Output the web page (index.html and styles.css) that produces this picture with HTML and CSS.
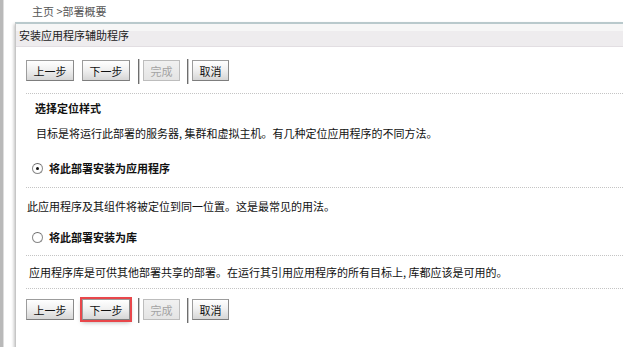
FILE: index.html
```html
<!DOCTYPE html>
<html>
<head>
    <title>部署概要</title>
    <link rel="stylesheet" href="styles.css">
</head>
<body>
    <div class="page">
        <div class="rail"></div>
        <div class="main">
            <div class="topbar"></div>
            <div class="crumb">主页 &gt;部署概要</div>

            <div class="panel">
                <div class="panel-head">安装应用程序辅助程序</div>
                <div class="panel-body">
                    <div class="btnbar">
                        <button class="btn wide">上一步</button>
                        <button class="btn wide">下一步</button>
                        <span class="sep"></span>
                        <button class="btn" disabled>完成</button>
                        <span class="sep"></span>
                        <button class="btn">取消</button>
                    </div>

                    <div class="section">
                        <div class="title">选择定位样式</div>
                        <p class="intro">目标是将运行此部署的服务器, 集群和虚拟主机。有几种定位应用程序的不同方法。</p>
                        <label class="choice first"><span class="radio checked"></span>将此部署安装为应用程序</label>
                    </div>

                    <div class="section">
                        <p class="desc">此应用程序及其组件将被定位到同一位置。这是最常见的用法。</p>
                        <label class="choice"><span class="radio"></span>将此部署安装为库</label>
                    </div>

                    <div class="section">
                        <p class="desc lib">应用程序库是可供其他部署共享的部署。在运行其引用应用程序的所有目标上, 库都应该是可用的。</p>
                    </div>

                    <div class="btnbar bottom">
                        <button class="btn wide">上一步</button>
                        <button class="btn wide marked">下一步</button>
                        <span class="sep"></span>
                        <button class="btn" disabled>完成</button>
                        <span class="sep"></span>
                        <button class="btn">取消</button>
                    </div>
                </div>
            </div>
        </div>
    </div>
</body>
</html>
```

FILE: styles.css
```css
html, body {
  margin: 0;
  padding: 0;
  background-color: #fff;
  overflow: hidden;
}
body {
  font-family: "Noto Sans CJK SC", "Liberation Sans", sans-serif;
  font-size: 11px;
  color: #111;
}
.page {
  display: flex;
  height: 347px;
}
.rail {
  width: 3px;
  background-color: #b9b9b9;
  border-right: 1px solid #dedede;
  flex: none;
}
.main {
  flex: 1;
  margin-left: 11px;
  display: flex;
  flex-direction: column;
}
.topbar {
  height: 2px;
  background-color: #d9e6f7;
}
.crumb {
  height: 26px;
  line-height: 22px;
  padding-left: 17px;
  color: #555;
}
.panel {
  border-top: 2px solid #b9c9cc;
  border-left: 1px solid #c6c6c6;
  border-bottom: 1px solid #969a9c;
  box-shadow: -1px 2px 3px rgba(0, 0, 0, 0.25);
}
.panel-head {
  height: 22px;
  line-height: 22px;
  padding-left: 3px;
  color: #222;
  background: linear-gradient(#f6f6f6 0, #f6f6f6 7px, #eeecee 7px, #eeecee 100%);
  border-bottom: 1px solid #e2dee2;
}
.panel-body {
  padding-left: 10px;
}
.btnbar {
  display: flex;
  align-items: center;
  padding: 10px 0 9px;
  border-bottom: 1px dotted #c4c4c4;
}
.btnbar.bottom {
  padding: 7px 0 24px;
  border-bottom: none;
}
.btn {
  height: 21px;
  width: 37px;
  padding: 0;
  font-family: inherit;
  font-size: 11px;
  color: #111;
  border: 1px solid #9c9c9c;
  border-right-color: #8a8a8a;
  border-bottom-color: #7d7d7d;
  background: linear-gradient(#ffffff, #f1f1f1 45%, #d6d6d6);
  margin-right: 8px;
}
.btn.wide {
  width: 48px;
}
.btn[disabled] {
  color: #a3a3a3;
  border-color: #bdbdbd;
  background: linear-gradient(#f1f1f1, #e4e4e4);
  margin-right: 7px;
}
.btn.marked {
  outline: 2px solid #e8474b;
  box-shadow: 0 2px 5px rgba(0, 0, 0, 0.35);
}
.sep {
  width: 1px;
  height: 25px;
  background-color: #6e6e6e;
  border-right: 1px solid #c8c8c8;
  margin-right: 3px;
  margin-top: 2px;
}
.section {
  border-bottom: 1px dotted #c4c4c4;
}
.title {
  font-weight: bold;
  line-height: 16px;
  padding: 6px 0 0 9px;
}
p {
  margin: 0;
}
.intro {
  line-height: 16px;
  margin-top: 9px;
  padding-left: 10px;
}
.desc {
  line-height: 16px;
  padding: 10px 0 0 1px;
}
.desc.lib {
  padding: 8px 0 8px 3px;
}
.choice {
  display: flex;
  align-items: center;
  height: 20px;
  font-weight: bold;
  padding-left: 6px;
  margin-top: 13px;
  padding-bottom: 8px;
}
.choice.first {
  margin-top: 17px;
  padding-bottom: 9px;
}
.radio {
  width: 9px;
  height: 9px;
  border-radius: 50%;
  border: 1px solid #8a8a8a;
  border-top-color: #6a6a6a;
  background: radial-gradient(circle, #fff 60%, #e4e4e4 100%);
  margin-right: 6px;
  position: relative;
  flex: none;
}
.radio.checked::after {
  content: "";
  position: absolute;
  left: 3px;
  top: 3px;
  width: 3px;
  height: 3px;
  border-radius: 50%;
  background-color: #111;
}
```
